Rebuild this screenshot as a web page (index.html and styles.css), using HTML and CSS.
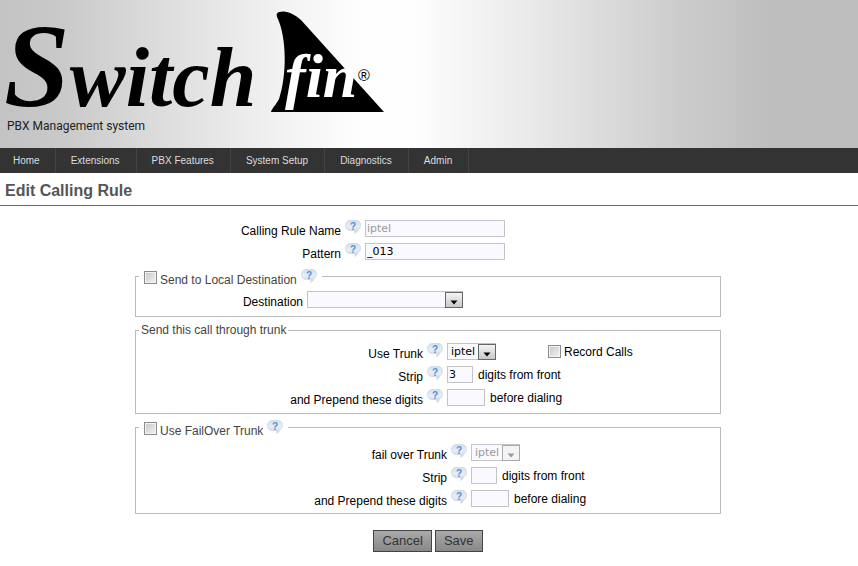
FILE: index.html
```html
<!DOCTYPE html>
<html lang="en">
<head>
<meta charset="utf-8">
<title>Edit Calling Rule - Switchfin</title>
<link rel="stylesheet" href="styles.css">
</head>
<body>
<svg class="defs" aria-hidden="true">
  <defs>
    <linearGradient id="bubble" x1="0" y1="0" x2="0" y2="1">
      <stop offset="0" stop-color="#d3e0ee"/>
      <stop offset=".5" stop-color="#e8eef5"/>
      <stop offset="1" stop-color="#cfd2d6"/>
    </linearGradient>
    <symbol id="help" viewBox="0 0 16 14">
      <path d="M5 .5h6C13.700 .5 15.500 2.300 15.500 5s-1.200 4.300-3 5c-.3 1.500-1.200 2.700-2.700 3.300.3-1 .3-1.900-.1-2.800H5C2.300 10.500.5 8.200.5 5.500S2.300.5 5 .5z" fill="url(#bubble)" stroke="#c9d2dc" stroke-width=".7"/>
      <text x="8" y="9.500" text-anchor="middle" class="help-mark">?</text>
    </symbol>
    <symbol id="arrow" viewBox="0 0 8 5"><path d="M0.500 0.500h7L4 4.500z" fill="currentColor"/></symbol>
  </defs>
</svg>

<header class="banner">
  <svg class="logo" viewBox="0 0 384 104" role="img" aria-label="Switchfin">
    <path d="M279 4C287 2 294 6 301 12L384 104H271C272 100 276 97 279 91C287 68 287 29 277 9C276 6 277 5 279 4z"/>
    <text x="4" y="98" class="logo-switch"><tspan class="logo-initial">S</tspan>witch</text>
    <text x="285" y="89" class="logo-fin">fin</text>
    <text x="358" y="73" class="logo-mark">®</text>
  </svg>
  <p class="tagline">PBX Management system</p>
</header>

<nav class="menu">
  <a href="#">Home</a>
  <a href="#">Extensions</a>
  <a href="#">PBX Features</a>
  <a href="#">System Setup</a>
  <a href="#">Diagnostics</a>
  <a href="#">Admin</a>
</nav>

<h1>Edit Calling Rule</h1>

<form class="rule">
  <div class="rows rows-main">
    <div class="row">
      <label for="name">Calling Rule Name</label>
      <svg class="help"><use href="#help"/></svg>
      <input id="name" class="wide" type="text" value="iptel" disabled>
    </div>
    <div class="row">
      <label for="pattern">Pattern</label>
      <svg class="help"><use href="#help"/></svg>
      <input id="pattern" class="wide" type="text" value="_013">
    </div>
  </div>

  <fieldset class="local">
    <legend><input id="local" type="checkbox"><label for="local">Send to Local Destination</label><svg class="help"><use href="#help"/></svg></legend>
    <div class="rows rows-local">
      <div class="row">
        <label for="destination">Destination</label>
        <span class="select select-wide"><select id="destination"><option></option></select><span class="drop"><svg><use href="#arrow"/></svg></span></span>
      </div>
    </div>
  </fieldset>

  <fieldset class="trunk">
    <legend class="plain">Send this call through trunk</legend>
    <div class="rows rows-trunk">
      <div class="row">
        <label for="trunk">Use Trunk</label>
        <svg class="help"><use href="#help"/></svg>
        <span class="select"><select id="trunk"><option>iptel</option></select><span class="drop"><svg><use href="#arrow"/></svg></span></span>
        <span class="record"><input id="record" type="checkbox"><label for="record">Record Calls</label></span>
      </div>
      <div class="row">
        <label for="strip">Strip</label>
        <svg class="help"><use href="#help"/></svg>
        <input id="strip" class="tiny" type="text" value="3">
        <span class="after">digits from front</span>
      </div>
      <div class="row">
        <label for="prepend">and Prepend these digits</label>
        <svg class="help"><use href="#help"/></svg>
        <input id="prepend" class="small" type="text">
        <span class="after">before dialing</span>
      </div>
    </div>
  </fieldset>

  <fieldset class="failover">
    <legend><input id="failover" type="checkbox"><label for="failover">Use FailOver Trunk</label><svg class="help"><use href="#help"/></svg></legend>
    <div class="rows rows-failover">
      <div class="row">
        <label for="fo-trunk">fail over Trunk</label>
        <svg class="help"><use href="#help"/></svg>
        <span class="select off"><select id="fo-trunk" disabled><option>iptel</option></select><span class="drop"><svg><use href="#arrow"/></svg></span></span>
      </div>
      <div class="row">
        <label for="fo-strip">Strip</label>
        <svg class="help"><use href="#help"/></svg>
        <input id="fo-strip" class="tiny" type="text">
        <span class="after">digits from front</span>
      </div>
      <div class="row">
        <label for="fo-prepend">and Prepend these digits</label>
        <svg class="help"><use href="#help"/></svg>
        <input id="fo-prepend" class="small" type="text">
        <span class="after">before dialing</span>
      </div>
    </div>
  </fieldset>

  <div class="actions">
    <button type="button">Cancel</button>
    <button type="submit">Save</button>
  </div>
</form>
</body>
</html>
```
FILE: styles.css
```css
* { box-sizing: border-box; }

body {
  margin: 0;
  background: #fff;
  color: #000;
  font: 12px/16px "Liberation Sans", Arial, sans-serif;
}

.defs { position: absolute; width: 0; height: 0; }

/* Banner */
.banner {
  height: 148px;
  padding-top: 8px;
  background: linear-gradient(90deg, #c3c3c3 0%, #c9c9c9 7%, #d8d8d8 16%, #e8e8e8 26%, #f5f5f5 35%, #fefefe 42%, #fefefe 48%, #ebebeb 61%, #dadada 71%, #cbcbcb 80%, #bebebe 90%, #bebebe 100%);
}
.logo { display: block; width: 384px; height: 104px; overflow: visible; }
.logo-switch { font: italic bold 84px "Liberation Serif", serif; }
.logo-initial { font-size: 118px; }
.logo-fin { font: italic bold 62px "Liberation Serif", serif; fill: #fff; }
.logo-mark { font: 16px "Liberation Sans", sans-serif; }
.tagline {
  margin: 6px 0 0 7px;
  font: 12px/16px Roboto, "Noto Sans", sans-serif;
  color: #222;
}

/* Menu */
.menu { display: flex; height: 25px; background: #333; }
.menu a {
  padding: 0 16px 0 15px;
  border-right: 1px solid #444;
  color: #ddd;
  font-size: 10px;
  line-height: 25px;
  text-decoration: none;
}
.menu a:first-child { padding: 0 15px 0 13px; }

h1 {
  margin: 0;
  padding: 8px 5px 4px;
  border-bottom: 1px solid #666;
  color: #555;
  font-size: 16px;
  line-height: 20px;
}

/* Form */
.rule { max-width: 588px; margin: 14px auto 0; padding-right: 2px; }
.rows { display: grid; gap: 6px; }
.row { display: flex; height: 17px; align-items: center; }
.row > label {
  flex: none;
  width: var(--label);
  padding-top: 4px;
  text-align: right;
}
.rows-main { --label: 206px; }
.rows-local { --label: 167px; }
.rows-trunk { --label: 287px; }
.rows-failover { --label: 311px; }

.help { flex: none; width: 16px; height: 14px; margin: 0 4px; }
.row .help { align-self: flex-start; }
.help-mark { font: bold 10px "Liberation Sans", sans-serif; fill: #4f93dc; }

input[type="text"], select {
  height: 17px;
  margin: 0;
  border: 1px solid #c3c3c8;
  border-radius: 0;
  background: #f9f9ff;
  color: #000;
  font: 11px/15px "DejaVu Sans", Verdana, sans-serif;
}
input[type="text"] { padding: 0 1px; }
.wide { width: 140px; }
.tiny { width: 26px; }
.small { width: 38px; }
input:disabled, select:disabled { color: #999; opacity: 1; }

.select { position: relative; display: flex; width: 49px; }
.select-wide { width: 156px; margin-left: 4px; }
select { width: 100%; padding: 0 18px 0 3px; appearance: none; }
.drop {
  position: absolute;
  top: 1px;
  right: 0;
  display: flex;
  width: 18px;
  height: 16px;
  align-items: center;
  justify-content: center;
  border: 1px solid #666;
  background: linear-gradient(#f4f4f4, #c8c8c8);
  pointer-events: none;
}
.drop svg { width: 8px; height: 5px; margin-top: 4px; }
.off .drop { border-color: #aaa; background: #f4f4f4; color: #999; }

.after { padding-left: 5px; }
.record { display: flex; margin-left: 52px; align-items: center; gap: 3px; }

input[type="checkbox"] {
  width: 13px;
  height: 13px;
  margin: 0;
  border: 1px solid #8b8b8b;
  outline: 1px solid #f4f4f4;
  outline-offset: -2px;
  background: linear-gradient(135deg, #c4c6c8, #f4f4f4);
  appearance: none;
}
input[type="checkbox"]:checked { background: #555; }

fieldset {
  min-width: 0;
  margin: 0;
  padding: 0;
  border: 1px solid #bbb;
}
legend {
  display: flex;
  height: 16px;
  margin-left: 3px;
  padding: 0 1px 0 5px;
  align-items: center;
  color: #444;
}
legend input[type="checkbox"] { margin-top: 3px; }
legend label { margin-left: 3px; padding-top: 7px; }
legend.plain { padding: 0 2px; }
.local { height: 49px; margin-top: 8px; }
.trunk { height: 92px; margin-top: 5px; }
.failover { height: 95px; margin-top: 5px; }
.rows-local { padding-top: 7px; }
.rows-trunk { padding-top: 5px; }
.rows-failover { padding-top: 9px; }

.actions { display: flex; margin-top: 16px; justify-content: center; gap: 3px; }
button {
  height: 22px;
  padding: 0 8px;
  border: 1px solid #444;
  border-radius: 0;
  background: linear-gradient(#aaa, #888);
  color: #333;
  font: 13px/18px "Liberation Sans", Arial, sans-serif;
}
```
